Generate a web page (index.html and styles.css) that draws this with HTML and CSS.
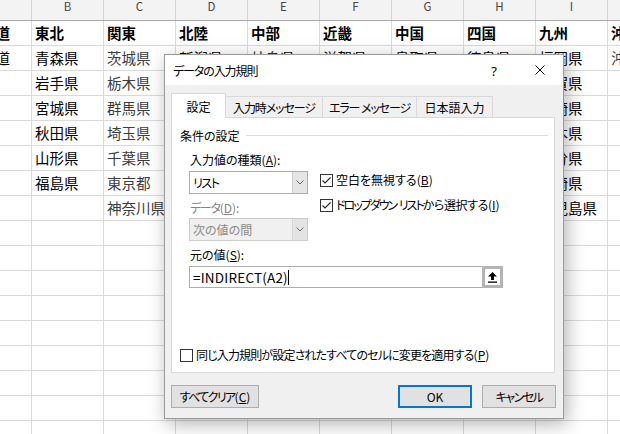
FILE: index.html
```html
<!DOCTYPE html>
<html lang="ja">
<head>
<meta charset="utf-8">
<title>データの入力規則</title>
<link rel="stylesheet" href="styles.css">
</head>
<body>
<div class="sheet">
  <div class="colhead">
    <div></div><div>B</div><div>C</div><div>D</div><div>E</div><div>F</div><div>G</div><div>H</div><div>I</div><div>J</div>
  </div>
  <div class="cells">
    <div class="ca bold"><span>北海道</span></div><div class="bold">東北</div><div class="bold">関東</div><div class="bold">北陸</div><div class="bold">中部</div><div class="bold">近畿</div><div class="bold">中国</div><div class="bold">四国</div><div class="bold">九州</div><div class="bold">沖縄</div>
    <div class="ca"><span>北海道</span></div><div>青森県</div><div class="gray">茨城県</div><div>新潟県</div><div>岐阜県</div><div>滋賀県</div><div>鳥取県</div><div>徳島県</div><div>福岡県</div><div class="gray">沖縄県</div>
    <div></div><div>岩手県</div><div class="gray">栃木県</div><div>富山県</div><div>静岡県</div><div>京都府</div><div>島根県</div><div>香川県</div><div>佐賀県</div><div></div>
    <div></div><div>宮城県</div><div class="gray">群馬県</div><div>石川県</div><div>愛知県</div><div>大阪府</div><div>岡山県</div><div>愛媛県</div><div>長崎県</div><div></div>
    <div></div><div>秋田県</div><div class="gray">埼玉県</div><div>福井県</div><div>三重県</div><div>兵庫県</div><div>広島県</div><div>高知県</div><div>熊本県</div><div></div>
    <div></div><div>山形県</div><div class="gray">千葉県</div><div></div><div>山梨県</div><div>奈良県</div><div>山口県</div><div></div><div>大分県</div><div></div>
    <div></div><div>福島県</div><div class="gray">東京都</div><div></div><div>長野県</div><div>和歌山県</div><div></div><div></div><div>宮崎県</div><div></div>
    <div></div><div></div><div class="gray">神奈川県</div><div></div><div></div><div></div><div></div><div></div><div>鹿児島県</div><div></div>
  </div>
</div>

<div class="dialog">
  <div class="titlebar">
    <span class="title">データの入力規則</span>
    <span class="tbtn help">?</span>
    <span class="tbtn close"><svg width="10" height="10" viewBox="0 0 10 10"><path d="M0.5 0.5L9.5 9.5M9.5 0.5L0.5 9.5" stroke="#000" stroke-width="1" fill="none"/></svg></span>
  </div>
  <div class="dbody">
    <div class="tabs">
      <div class="tab active t1">設定</div>
      <div class="tab t2">入力時メッセージ</div>
      <div class="tab t3">エラー メッセージ</div>
      <div class="tab t4">日本語入力</div>
    </div>
    <div class="panel">
      <div class="group"><span>条件の設定</span><i class="rule"></i></div>
      <div class="fields">
        <div class="lbl">入力値の種類(<u>A</u>):</div>
        <div class="split">
          <div class="left">
            <div class="select"><span class="sval kana">リスト</span><span class="drop"><svg width="8" height="5" viewBox="0 0 8 5"><path d="M0.5 0.5L4 4L7.5 0.5" stroke="#606060" fill="none"/></svg></span></div>
            <div class="lbl dim"><span class="dk">データ</span>(<u>D</u>):</div>
            <div class="select disabled"><span class="sval">次の値の間</span><span class="drop"><svg width="8" height="5" viewBox="0 0 8 5"><path d="M0.5 0.5L4 4L7.5 0.5" stroke="#707070" fill="none"/></svg></span></div>
          </div>
          <div class="right">
            <div class="check"><span class="box"><svg width="11" height="11" viewBox="0 0 11 11"><path d="M1.5 5.5L4 8L9.5 2.5" stroke="#222" stroke-width="1.1" fill="none"/></svg></span><span>空白を無視する(<u>B</u>)</span></div>
            <div class="check second"><span class="box"><svg width="11" height="11" viewBox="0 0 11 11"><path d="M1.5 5.5L4 8L9.5 2.5" stroke="#222" stroke-width="1.1" fill="none"/></svg></span><span><span class="kk">ドロップダウン</span>&nbsp;<span class="kk">リスト</span><span class="hk">から選択する</span>(<u>I</u>)</span></div>
          </div>
        </div>
        <div class="lbl src-lbl">元の値(<u>S</u>):</div>
        <div class="source"><span class="val">=INDIRECT(A2)<i class="caret"></i></span><span class="pick"><svg width="9" height="11" viewBox="0 0 9 11"><path d="M4.5 0L0 4.5H3V8H6V4.5H9Z" fill="#000"/><rect x="0" y="9.5" width="9" height="1.3" fill="#000"/></svg></span></div>
      </div>
      <div class="check apply"><span class="box"></span><span><span class="tight2">同じ入力規則が設定されたすべてのセルに変更を適用する</span>(<u>P</u>)</span></div>
    </div>
    <div class="buttons">
      <button class="btn clear"><span class="ck">すべてクリア</span>(<u>C</u>)</button>
      <span class="grow"></span>
      <button class="btn ok">OK</button>
      <button class="btn cancel">キャンセル</button>
    </div>
  </div>
</div>
</body>
</html>
```

FILE: styles.css
```css
* { box-sizing: border-box; }
html, body { margin: 0; padding: 0; }
body {
  width: 620px;
  height: 434px;
  overflow: hidden;
  position: relative;
  background: #fff;
  font-family: "Noto Sans CJK JP", "Noto Sans", sans-serif;
  color: #000;
}

/* ---------- spreadsheet ---------- */
.sheet {
  height: 434px;
  width: 620px;
  overflow: hidden;
  background:
    linear-gradient(to right, transparent 71px, #dadada 71px) 32px 0 / 72px 100% repeat-x,
    linear-gradient(transparent 24px, #dadada 24px) 0 21px / 100% 25px repeat-y,
    #fff;
}
.colhead {
  display: grid;
  grid-template-columns: 32px repeat(9, 72px);
  height: 21px;
  background: #f3f3f3;
  border-bottom: 1px solid #ababab;
}
.colhead div {
  border-right: 1px solid #d4d4d4;
  text-align: center;
  font-size: 11.5px;
  line-height: 12px;
  color: #444;
}
.cells {
  display: grid;
  grid-template-columns: 32px repeat(9, 72px);
  grid-auto-rows: 25px;
}
.cells div {
  padding-left: 3px;
  font-size: 14.5px;
  line-height: 24px;
  white-space: nowrap;
  overflow: hidden;
}
.cells .bold { font-weight: 700; }
.cells .gray { color: #3c3c3c; }
.cells .ca {
  display: flex;
  justify-content: flex-end;
  padding-left: 0;
  padding-right: 22px;
}
.cells .ca span { flex: none; }

/* ---------- dialog ---------- */
.dialog {
  position: absolute;
  left: 164px;
  top: 54px;
  width: 400px;
  height: 365px;
  border: 1px solid #9a9a9a;
  background: #f0f0f0;
  box-shadow: 3px 5px 18px rgba(0, 0, 0, 0.3);
  font-size: 12px;
  font-feature-settings: "palt";
  display: flex;
  flex-direction: column;
}
.titlebar {
  height: 30px;
  background: #fff;
  display: flex;
  align-items: center;
  flex: none;
}
.title {
  flex: 1;
  padding-left: 8px;
  font-size: 12px;
  letter-spacing: -1.1px;
}
.tbtn {
  width: 46px;
  height: 30px;
  display: flex;
  align-items: center;
  justify-content: center;
}
.help { font-family: "Noto Sans", sans-serif; font-size: 13px; padding-top: 1px; }

.dbody {
  flex: 1;
  padding: 8px 7px 10px 6px;
  display: flex;
  flex-direction: column;
}
.tabs {
  height: 24px;
  display: flex;
  align-items: flex-end;
}
.tab {
  height: 21px;
  border: 1px solid #d9d9d9;
  border-bottom: none;
  background: #f0f0f0;
  display: flex;
  align-items: center;
  justify-content: center;
  margin-left: -1px;
  padding-top: 1px;
  white-space: nowrap;
}
.tab.active {
  height: 25px;
  background: #fff;
  margin-left: 0;
  margin-bottom: -1px;
  position: relative;
  z-index: 1;
}
.t1 { width: 55px; }
.t2 { width: 98px; letter-spacing: -1.1px; }
.t3 { width: 95px; letter-spacing: -1.1px; }
.t4 { width: 77px; }

.panel {
  height: 256px;
  margin-right: 1px;
  background: #fff;
  border: 1px solid #d9d9d9;
  display: flex;
  flex-direction: column;
}
.group {
  margin-top: 10px;
  height: 16px;
  line-height: 16px;
  padding-left: 8px;
  display: flex;
  align-items: center;
}
.rule {
  flex: 1;
  height: 1px;
  background: #dcdcdc;
  margin: -1px 6px 0 6px;
}
.fields {
  padding-left: 17px;
  margin-top: 8px;
}
.lbl {
  line-height: 16px;
  height: 16px;
  padding-left: 1px;
}
.lbl.dim { color: #838383; margin-top: 6px; }
.dk { letter-spacing: -1.3px; }
.src-lbl { margin-top: 6px; }
.split {
  display: flex;
  margin-top: 3px;
}
.left { width: 119px; }
.select {
  height: 23px;
  border: 1px solid #adadad;
  background: #fff;
  display: flex;
}
.select.disabled {
  margin-top: 2px;
  background: #f0f0f0;
  border-color: #cccccc;
  color: #8a8a8a;
}
.sval {
  flex: 1;
  padding-left: 3px;
  line-height: 21px;
}
.kana { letter-spacing: -1.4px; }
.drop {
  width: 15px;
  background: #e5e5e5;
  border-left: 1px solid #cfcfcf;
  display: flex;
  align-items: center;
  justify-content: center;
}
.select.disabled .drop { background: #e3e3e3; border-left-color: #d6d6d6; }
.right {
  margin-left: 12px;
  padding-top: 1px;
}
.check {
  display: flex;
  align-items: center;
  height: 16px;
  line-height: 16px;
  white-space: nowrap;
}
.check.second { margin-top: 9px; }
.kk { letter-spacing: -2px; }
.hk { letter-spacing: -0.4px; }
.tight2 { letter-spacing: -0.85px; }
.box {
  width: 13px;
  height: 13px;
  border: 1px solid #333;
  background: #fff;
  margin-right: 3px;
  flex: none;
  display: flex;
  align-items: center;
  justify-content: center;
}
.source {
  margin-top: 3px;
  width: 314px;
  height: 22px;
  border: 1px solid #adadad;
  background: #fff;
  display: flex;
}
.val {
  flex: 1;
  padding-left: 3px;
  line-height: 20px;
  font-size: 13.5px;
  letter-spacing: 0.2px;
  display: flex;
  align-items: center;
}
.caret {
  display: inline-block;
  width: 1px;
  height: 15px;
  background: #000;
}
.pick {
  width: 21px;
  height: 22px;
  margin: -1px -1px -1px 0;
  border: 3px solid #b4b4b4;
  background: #fff;
  display: flex;
  align-items: center;
  justify-content: center;
  flex: none;
}
.apply {
  margin-top: auto;
  margin-bottom: 9px;
  padding-left: 8px;
}
.buttons {
  margin-top: 12px;
  display: flex;
  height: 23px;
}
.grow { flex: 1; }
.btn {
  height: 23px;
  border: 1px solid #adadad;
  background: #e1e1e1;
  font-family: inherit;
  font-size: 12px;
  font-feature-settings: "palt";
  color: #000;
  padding: 0;
}
.clear { width: 88px; }
.ck { letter-spacing: -1.6px; }
.ok { width: 74px; border: 2px solid #0078d7; }
.cancel { width: 74px; margin-left: 10px; letter-spacing: -1.5px; }
u { text-underline-offset: 1px; }
```
